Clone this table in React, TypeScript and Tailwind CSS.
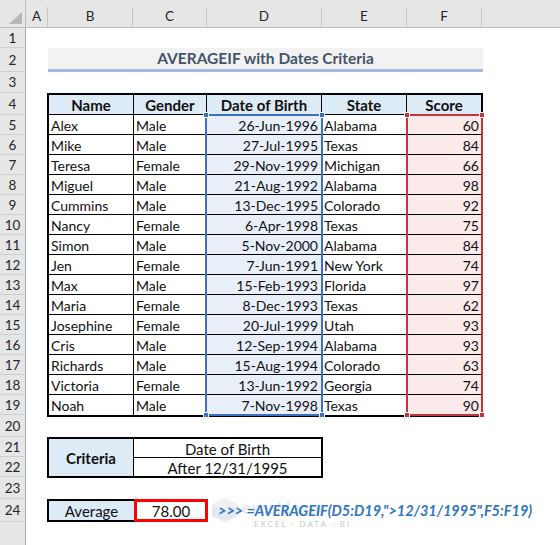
import React from "react";

const rows: [string, string, string, string, number][] = [
  ["Alex", "Male", "26-Jun-1996", "Alabama", 60],
  ["Mike", "Male", "27-Jul-1995", "Texas", 84],
  ["Teresa", "Female", "29-Nov-1999", "Michigan", 66],
  ["Miguel", "Male", "21-Aug-1992", "Alabama", 98],
  ["Cummins", "Male", "13-Dec-1995", "Colorado", 92],
  ["Nancy", "Female", "6-Apr-1998", "Texas", 75],
  ["Simon", "Male", "5-Nov-2000", "Alabama", 84],
  ["Jen", "Female", "7-Jun-1991", "New York", 74],
  ["Max", "Male", "15-Feb-1993", "Florida", 97],
  ["Maria", "Female", "8-Dec-1993", "Texas", 62],
  ["Josephine", "Female", "20-Jul-1999", "Utah", 93],
  ["Cris", "Male", "12-Sep-1994", "Alabama", 93],
  ["Richards", "Male", "15-Aug-1994", "Colorado", 63],
  ["Victoria", "Female", "13-Jun-1992", "Georgia", 74],
  ["Noah", "Male", "7-Nov-1998", "Texas", 90],
];

const cols: [string, string][] = [
  ["A", "w-[22px]"],
  ["B", "w-[85px]"],
  ["C", "w-[74px]"],
  ["D", "w-[115px]"],
  ["E", "w-[85px]"],
  ["F", "w-[75px]"],
];

const rowHeights: [string, string][] = [
  ["1", "h-[20px]"],
  ["2", "h-[24px]"],
  ["3", "h-[21px]"],
  ["4", "h-[22px]"],
  ["5", "h-[20px]"],
  ["6", "h-[20px]"],
  ["7", "h-[20px]"],
  ["8", "h-[20px]"],
  ["9", "h-[20px]"],
  ["10", "h-[20px]"],
  ["11", "h-[20px]"],
  ["12", "h-[20px]"],
  ["13", "h-[20px]"],
  ["14", "h-[20px]"],
  ["15", "h-[20px]"],
  ["16", "h-[20px]"],
  ["17", "h-[20px]"],
  ["18", "h-[20px]"],
  ["19", "h-[20px]"],
  ["20", "h-[22px]"],
  ["21", "h-[20px]"],
  ["22", "h-[20px]"],
  ["23", "h-[22px]"],
  ["24", "h-[23px]"],
];

function Handles({ color }: { color: string }) {
  const sq = `absolute w-[6px] h-[6px] border border-white ${color}`;
  return (
    <>
      <div className={`${sq} left-[-4px] top-[-4px]`} />
      <div className={`${sq} right-[-4px] top-[-4px]`} />
      <div className={`${sq} left-[-4px] bottom-[-4px]`} />
      <div className={`${sq} right-[-4px] bottom-[-4px]`} />
    </>
  );
}

export default function App() {
  const font = { fontFamily: "Lato, 'Open Sans', sans-serif" };
  return (
    <div
      className="w-[560px] h-[545px] overflow-hidden bg-white text-[#111] flex flex-col"
      style={font}
    >
      {/* column header */}
      <div className="flex h-[28px] bg-[#e6e6e6] border-b border-[#bcbcbc] items-end shrink-0">
        <div className="w-[26px] h-[28px] flex items-end justify-end border-r border-[#bcbcbc] pb-[3px] pr-[2px]">
          <svg width="14" height="12" viewBox="0 0 14 12">
            <polygon points="0,12 13,12 13,0" fill="#b7b7b7" />
          </svg>
        </div>
        {cols.map(([l, w]) => (
          <div
            key={l}
            className={`${w} h-[20px] border-r border-[#c6c6c6] flex items-end justify-center pb-[4px] text-[13.5px] leading-none text-[#262626]`}
          >
            {l}
          </div>
        ))}
      </div>

      <div className="flex flex-1">
        {/* row header */}
        <div className="w-[26px] bg-[#e6e6e6] border-r border-[#a8a8a8] flex flex-col shrink-0">
          {rowHeights.map(([n, h]) => (
            <div
              key={n}
              className={`${h} border-b border-[#cfcfcf] flex items-center justify-center text-[13.5px] leading-none text-[#262626] pt-[2px]`}
            >
              {n}
            </div>
          ))}
        </div>

        {/* sheet */}
        <div className="flex flex-col pl-[21px] text-[14px] leading-none">
          <div className="h-[20px]" />
          {/* title */}
          <div className="h-[24px] w-[435px] ml-[1px] bg-[#f2f2f2] border-b-[3px] border-[#a7b8e2] flex items-center justify-center pt-[1px] text-[15.5px] font-bold text-[#44546a]">
            AVERAGEIF with Dates Criteria
          </div>
          <div className="h-[21px]" />

          {/* table */}
          <div className="relative w-[436px] border-2 border-black">
            <div className="grid grid-cols-[85px_73px_115px_85px_74px] h-[20px] bg-[#ddebf7] border-b border-black font-bold text-[15px]">
              {["Name", "Gender", "Date of Birth", "State", "Score"].map((h, i) => (
                <div
                  key={h}
                  className={`flex items-center justify-center pt-[2px] ${i < 4 ? "border-r border-black" : ""}`}
                >
                  {h}
                </div>
              ))}
            </div>
            {rows.map((r, idx) => (
              <div
                key={r[0]}
                className={`grid grid-cols-[85px_73px_115px_85px_74px] h-[20px] ${idx < rows.length - 1 ? "border-b border-black" : ""}`}
              >
                <div className="border-r border-black flex items-center pl-[2px] pt-[2px]">{r[0]}</div>
                <div className="border-r border-black flex items-center pl-[2px] pt-[2px]">{r[1]}</div>
                <div className="border-r border-black bg-[#e9eff9] flex items-center justify-end pr-[3px] pt-[2px]">{r[2]}</div>
                <div className="border-r border-black flex items-center pl-[2px] pt-[2px]">{r[3]}</div>
                <div className="bg-[#fbeaea] flex items-center justify-end pr-[2px] pt-[2px]">{r[4]}</div>
              </div>
            ))}
            {/* range highlights */}
            <div className="absolute left-[156px] top-[19px] w-[118px] h-[302px] border-2 border-[#3d6fc6]">
              <Handles color="bg-[#3d6fc6]" />
            </div>
            <div className="absolute left-[357px] top-[19px] w-[77px] h-[302px] border-2 border-[#c3363f]">
              <Handles color="bg-[#c3363f]" />
            </div>
          </div>

          <div className="h-[20px]" />

          {/* criteria */}
          <div className="w-[276px] h-[41px] border-2 border-black flex text-[15px]">
            <div className="w-[85px] border-r border-black bg-[#ddebf7] flex items-center justify-center font-bold pt-[2px]">
              Criteria
            </div>
            <div className="flex-1 flex flex-col">
              <div className="h-[19px] border-b border-black flex items-center justify-center pt-[2px]">
                Date of Birth
              </div>
              <div className="flex-1 flex items-center justify-center pt-[2px]">After 12/31/1995</div>
            </div>
          </div>

          <div className="h-[21px]" />

          {/* average */}
          <div className="relative flex h-[23px] items-stretch text-[15px]">
            <div className="w-[87px] border-2 border-r-0 border-black bg-[#ddebf7] flex items-center justify-center pt-[2px]">
              Average
            </div>
            <div className="w-[74px] border-[3px] border-[#ff0000] flex items-center justify-center pt-[2px]">
              78.00
            </div>
            <div className="relative ml-[10px] flex items-center">
              <div className="absolute left-[-8px] top-[-2px] flex items-start gap-[2px] pointer-events-none select-none">
                <svg width="30" height="26" viewBox="0 0 30 26">
                  <polygon points="15,1 28,8 28,19 15,25 2,19 2,8" fill="#e3e8f3" />
                  <polygon points="15,1 28,8 15,14 2,8" fill="#edf0f7" />
                </svg>
                <div className="flex flex-col items-start mt-[2px]">
                  <span className="text-[17px] font-bold text-[#e6eaf3] leading-none">exceldemy</span>
                  <span className="text-[8px] tracking-[2px] text-[#c9c9c9] leading-none mt-[4px] ml-[12px]">
                    EXCEL · DATA · BI
                  </span>
                </div>
              </div>
              <span className="relative text-[14.5px] font-bold italic text-[#2f75c0] whitespace-nowrap pt-[2px]">
                {">>> =AVERAGEIF(D5:D19,\">12/31/1995\",F5:F19)"}
              </span>
            </div>
          </div>
        </div>
      </div>
    </div>
  );
}
